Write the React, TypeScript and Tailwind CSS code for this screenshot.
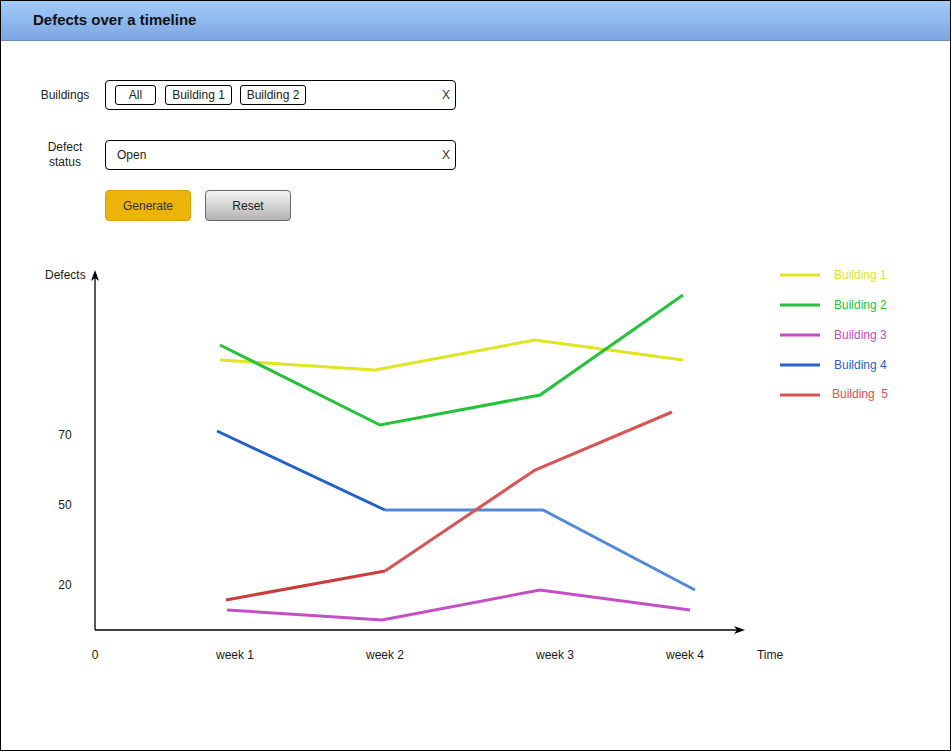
import React from "react";

type Series = {
  name: string;
  color: string;
  segments: { color: string; points: [number, number][] }[];
};

const series: Series[] = [
  {
    name: "Building 1",
    color: "#e1e421",
    segments: [{ color: "#e1e421", points: [[220, 360], [375, 370], [535, 340], [683, 360]] }],
  },
  {
    name: "Building 2",
    color: "#25c23c",
    segments: [{ color: "#25c23c", points: [[220, 345], [380, 425], [540, 395], [683, 295]] }],
  },
  {
    name: "Building 3",
    color: "#c44fc4",
    segments: [{ color: "#c44fc4", points: [[227, 610], [382, 620], [540, 590], [690, 610]] }],
  },
  {
    name: "Building 4",
    color: "#2663cc",
    segments: [
      { color: "#2261cc", points: [[217, 431], [385, 510]] },
      { color: "#5289d9", points: [[385, 510], [543, 510], [695, 590]] },
    ],
  },
  {
    name: "Building  5",
    color: "#d95252",
    segments: [
      { color: "#cf3a3a", points: [[226, 600], [385, 571]] },
      { color: "#d95454", points: [[385, 571], [535, 470], [672, 412]] },
    ],
  },
];

const yTicks = [
  { label: "70", y: 435 },
  { label: "50", y: 505 },
  { label: "20", y: 585 },
];

const xTicks = [
  { label: "0", x: 95 },
  { label: "week 1", x: 235 },
  { label: "week 2", x: 385 },
  { label: "week 3", x: 555 },
  { label: "week 4", x: 685 },
  { label: "Time", x: 770 },
];

const legendY = [279, 309, 339, 369, 398];

function Chip({ label, width }: { label: string; width: string }) {
  return (
    <span
      className={`${width} h-[20px] flex items-center justify-center border border-black rounded-[3px] text-[12px] text-[#222] leading-none`}
    >
      {label}
    </span>
  );
}

function TimelineChart() {
  return (
    <svg
      width={949}
      height={510}
      viewBox="1 240 949 510"
      className="block"
      style={{ fontFamily: '"Liberation Sans", Arial, sans-serif' }}
    >
      {/* axes */}
      <line x1={95} y1={630} x2={95} y2={278} stroke="#000" strokeWidth={1.3} />
      <polygon points="95,270 91,281 95,278 99,281" fill="#000" />
      <line x1={95} y1={630} x2={737} y2={630} stroke="#000" strokeWidth={1.3} />
      <polygon points="745,630 734,626 737,630 734,634" fill="#000" />

      <text x={45} y={279} fontSize={12} fill="#1a1a1a">Defects</text>
      {yTicks.map((t) => (
        <text key={t.label} x={65} y={t.y + 4} fontSize={12} fill="#1a1a1a" textAnchor="middle">
          {t.label}
        </text>
      ))}
      {xTicks.map((t) => (
        <text key={t.label} x={t.x} y={659} fontSize={12} fill="#1a1a1a" textAnchor="middle">
          {t.label}
        </text>
      ))}

      {/* data lines */}
      {series.map((s) =>
        s.segments.map((seg, i) => (
          <polyline
            key={s.name + i}
            points={seg.points.map((p) => p.join(",")).join(" ")}
            fill="none"
            stroke={seg.color}
            strokeWidth={3}
            strokeLinejoin="miter"
          />
        ))
      )}

      {/* legend */}
      {series.map((s, i) => (
        <g key={s.name}>
          <line x1={780} y1={275 + i * 30} x2={820} y2={275 + i * 30} stroke={s.color} strokeWidth={3} />
          <text x={i === 4 ? 832 : 834} y={legendY[i]} fontSize={12} fill={s.color} xmlSpace="preserve">
            {s.name}
          </text>
        </g>
      ))}
    </svg>
  );
}

export default function App() {
  return (
    <div
      className="w-[951px] h-[751px] border border-black bg-white flex flex-col overflow-hidden"
      style={{ fontFamily: '"Liberation Sans", Arial, sans-serif' }}
    >
      {/* Header */}
      <div className="h-[40px] shrink-0 border-b border-[#6c8ebf] bg-gradient-to-b from-[#a1cbfa] to-[#7ea6e0] flex items-center pl-[32px]">
        <h1 className="text-[15px] font-bold text-[#111]">Defects over a timeline</h1>
      </div>

      {/* Filters */}
      <div className="mt-[39px] flex flex-col pl-[24px]">
        <div className="flex items-center h-[30px]">
          <span className="w-[80px] text-center text-[12px] text-[#222]">Buildings</span>
          <div className="w-[351px] h-[30px] border border-black rounded-[4px] flex items-center pl-[9px] pr-[5px]">
            <Chip label="All" width="w-[41px]" />
            <span className="w-[9px]" />
            <Chip label="Building 1" width="w-[67px]" />
            <span className="w-[8px]" />
            <Chip label="Building 2" width="w-[66px]" />
            <span className="ml-auto text-[12px] text-[#333]">X</span>
          </div>
        </div>

        <div className="flex items-center h-[30px] mt-[30px]">
          <span className="w-[80px] text-center text-[12px] leading-[15px] text-[#222]">
            Defect
            <br />
            status
          </span>
          <div className="w-[351px] h-[30px] border border-black rounded-[4px] flex items-center pl-[11px] pr-[5px]">
            <span className="text-[12px] text-[#222]">Open</span>
            <span className="ml-auto text-[12px] text-[#333]">X</span>
          </div>
        </div>

        <div className="flex items-center gap-[14px] mt-[20px] ml-[80px]">
          <button className="w-[86px] h-[31px] rounded-[4px] border border-[#d6a300] bg-[#ecb40b] text-[12px] text-[#333]">
            Generate
          </button>
          <button className="w-[86px] h-[31px] rounded-[4px] border border-[#666] bg-gradient-to-b from-[#f5f5f5] to-[#b3b3b3] text-[12px] text-[#222]">
            Reset
          </button>
        </div>
      </div>

      {/* Chart */}
      <div className="mt-[19px]">
        <TimelineChart />
      </div>
    </div>
  );
}
